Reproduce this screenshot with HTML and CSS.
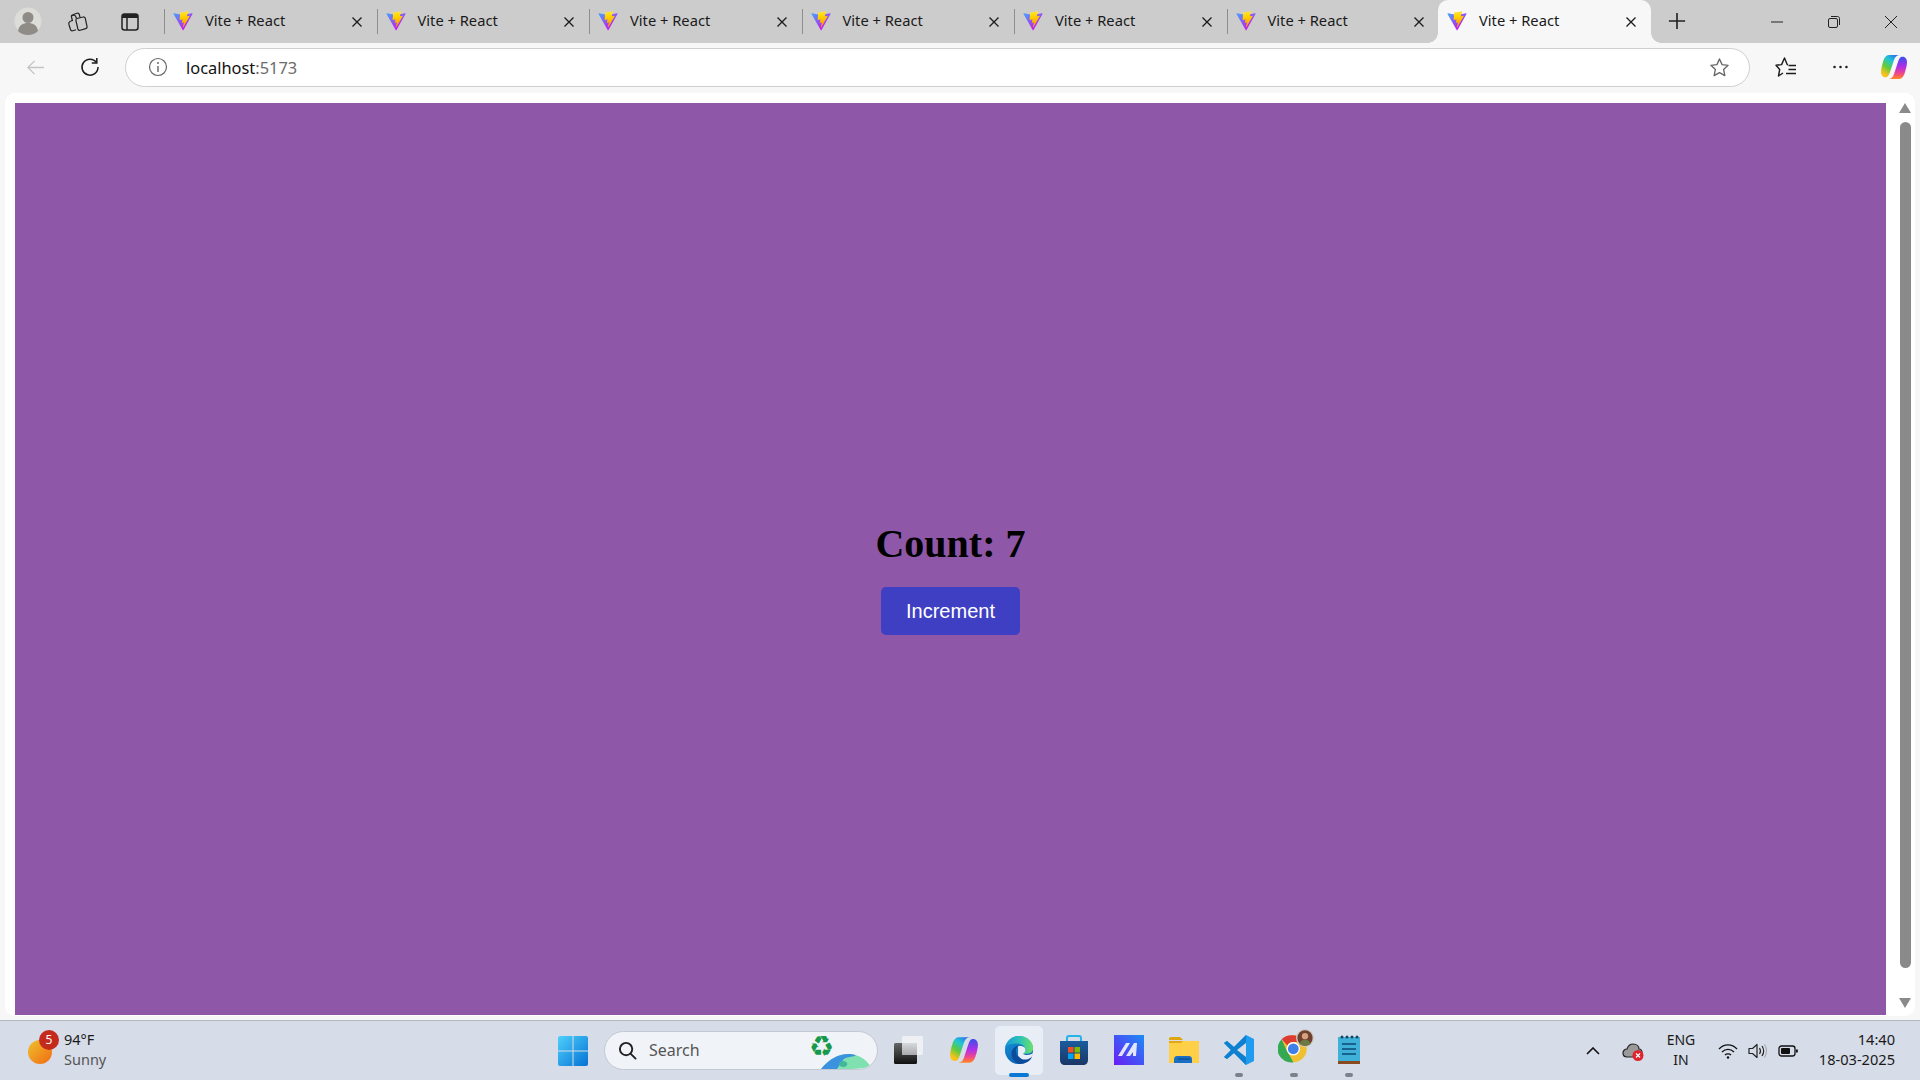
FILE: index.html
```html
<!DOCTYPE html>
<html lang="en">
<head>
    <meta charset="UTF-8">
    <meta name="viewport" content="width=device-width, initial-scale=1.0">
    <title>Vite + React</title>
    <link rel="stylesheet" href="styles.css">
</head>
<body>

<svg class="defs" width="0" height="0">
    <defs>
        <linearGradient id="vite-a" gradientUnits="userSpaceOnUse" x1="6" y1="33" x2="235" y2="344">
            <stop offset="0" stop-color="#3fa8ff"/><stop offset="1" stop-color="#c020f0"/>
        </linearGradient>
        <linearGradient id="vite-b" gradientUnits="userSpaceOnUse" x1="194" y1="8" x2="236" y2="293">
            <stop offset="0" stop-color="#ffe24a"/><stop offset="0.3" stop-color="#ffd800"/><stop offset="1" stop-color="#ff9a00"/>
        </linearGradient>
        <symbol id="vite" viewBox="0 0 410 404">
            <path fill="url(#vite-a)" d="M399.641 59.5246L215.643 388.545C211.844 395.338 202.084 395.378 198.228 388.618L10.5817 59.5563C6.38087 52.1896 12.6802 43.2665 21.0281 44.7586L205.223 77.6824C206.398 77.8924 207.601 77.8904 208.776 77.6763L389.119 44.8058C397.439 43.2894 403.768 52.1434 399.641 59.5246Z"/>
            <path fill="url(#vite-b)" transform="translate(-30 0) scale(1.15 1)" d="M292.965 1.5744L156.801 28.2552C154.563 28.6937 152.906 30.5903 152.771 32.8664L144.395 174.33C144.198 177.662 147.258 180.248 150.51 179.498L188.42 170.749C191.967 169.931 195.172 173.055 194.443 176.622L183.18 231.775C182.422 235.487 185.907 238.661 189.532 237.56L212.947 230.446C216.577 229.344 220.065 232.527 219.297 236.242L201.398 322.875C200.278 328.294 207.486 331.249 210.492 326.603L212.5 323.5L323.454 102.072C325.312 98.3645 322.108 94.137 318.036 94.9228L279.014 102.454C275.347 103.161 272.227 99.746 273.262 96.1583L298.731 7.86689C299.767 4.27314 296.636 0.855181 292.965 1.5744Z"/>
        </symbol>
        <symbol id="close" viewBox="0 0 12 12">
            <path d="M1.5 1.5l9 9M10.5 1.5l-9 9" stroke="#1a1a1a" stroke-width="1.3" fill="none"/>
        </symbol>
        <linearGradient id="copilot-a" x1=".8" y1="0" x2=".2" y2="1">
            <stop offset="0" stop-color="#2a6ee8"/><stop offset=".3" stop-color="#21c4d8"/><stop offset=".6" stop-color="#5ccb3e"/><stop offset=".9" stop-color="#f8c21a"/>
        </linearGradient>
        <linearGradient id="copilot-b" x1=".5" y1="0" x2=".5" y2="1">
            <stop offset="0" stop-color="#3a50e8"/><stop offset=".45" stop-color="#b02ee8"/><stop offset=".75" stop-color="#f0468c"/><stop offset="1" stop-color="#ff8a1e"/>
        </linearGradient>
        <symbol id="copilot" viewBox="0 0 28 28">
            <path fill="url(#copilot-a)" d="M9 2h11c-3 0-5 1.500-6 5l-3 9c-1 3-2 7-4 8-3 1-6-1-6-5 0-3 1-7 2-10 1-4 3-7 6-7z"/>
            <path fill="url(#copilot-b)" d="M19 26H8c3 0 5-1.500 6-5l3-9c1-3 2-7 4-8 3-1 6 1 6 5 0 3-1 7-2 10-1 4-3 7-6 7z"/>
        </symbol>
    </defs>
</svg>

<div class="tabstrip">
    <div class="strip-tools">
        <svg class="profile" viewBox="0 0 28 28">
            <circle cx="14" cy="14" r="13.5" fill="#dcdcd8"/>
            <circle cx="14" cy="10.5" r="5.5" fill="#8f8c88"/>
            <path d="M4 24c1-6 5-8 10-8s9 2 10 8c-2.500 2.500-6 4-10 4s-7.500-1.500-10-4z" fill="#8f8c88"/>
        </svg>
        <svg class="tool-icon" viewBox="0 0 22 22" fill="none" stroke="#222" stroke-width="1.200" stroke-linejoin="round">
            <path d="M11 7.500l6-1.500c1-.3 2 .3 2.300 1.300l1.700 8c.2 1-.3 2-1.300 2.300l-5.500 1.700c-1 .3-2-.3-2.300-1.300L10 9.800c-.2-1 0-2 1-2.300z"/>
            <path d="M10.500 7.500l-.8-2c-.3-1-1.300-1.500-2.300-1.200l-1.400.5"/>
            <path d="M6.500 10L5.500 6c-.3-1 .3-2 1.300-2.300L11 2.200c1-.3 2 .3 2.300 1.300l.7 2.800"/>
            <path d="M6.500 9.500c-1 .3-3 1-3.500 2-.3.700-.2 1.500 0 2.200l1.500 4.800c.3 1 1.300 1.500 2.300 1.200l3.200-1"/>
        </svg>
        <svg class="tool-icon" viewBox="0 0 22 22">
            <rect x="3" y="3" width="16" height="16" rx="2.500" fill="none" stroke="#222" stroke-width="1.500"/>
            <path d="M3 6c0-2 1-3 2.500-3h11C18 3 19 4 19 6v1H3z" fill="#222"/>
            <path d="M8 7v12" stroke="#222" stroke-width="1.500"/>
        </svg>
    </div>
    <div class="tab"><svg class="tab-icon"><use href="#vite"/></svg><span class="tab-title">Vite + React</span><svg class="tab-close"><use href="#close"/></svg></div>
    <div class="tab"><svg class="tab-icon"><use href="#vite"/></svg><span class="tab-title">Vite + React</span><svg class="tab-close"><use href="#close"/></svg></div>
    <div class="tab"><svg class="tab-icon"><use href="#vite"/></svg><span class="tab-title">Vite + React</span><svg class="tab-close"><use href="#close"/></svg></div>
    <div class="tab"><svg class="tab-icon"><use href="#vite"/></svg><span class="tab-title">Vite + React</span><svg class="tab-close"><use href="#close"/></svg></div>
    <div class="tab"><svg class="tab-icon"><use href="#vite"/></svg><span class="tab-title">Vite + React</span><svg class="tab-close"><use href="#close"/></svg></div>
    <div class="tab"><svg class="tab-icon"><use href="#vite"/></svg><span class="tab-title">Vite + React</span><svg class="tab-close"><use href="#close"/></svg></div>
    <div class="tab active"><svg class="tab-icon"><use href="#vite"/></svg><span class="tab-title">Vite + React</span><svg class="tab-close"><use href="#close"/></svg></div>
    <svg class="new-tab" viewBox="0 0 20 20"><path d="M10 1v18M1 10h18" stroke="#222" stroke-width="1.800"/></svg>
    <div class="window-controls">
        <svg viewBox="0 0 14 14"><path d="M1 7h12" stroke="#222" stroke-width="1"/></svg>
        <svg viewBox="0 0 14 14" fill="none" stroke="#222" stroke-width="1"><rect x="1.500" y="3.500" width="9" height="9" rx="1.500"/><path d="M4 1.500h6.500c1.200 0 2 .8 2 2V10"/></svg>
        <svg viewBox="0 0 14 14"><path d="M1 1l12 12M13 1L1 13" stroke="#222" stroke-width="1"/></svg>
    </div>
</div>

<div class="toolbar">
    <svg class="back" viewBox="0 0 20 20"><path d="M19 10H2M9 3l-7 7 7 7" fill="none" stroke="#c4c4c4" stroke-width="1.400"/></svg>
    <svg class="reload" viewBox="0 0 20 20" fill="none" stroke="#1c1c1c" stroke-width="1.500"><path d="M16.500 5.500A8 8 0 1 0 18 10"/><path d="M16.800 1v5h-5"/></svg>
    <div class="address">
        <svg class="info" viewBox="0 0 20 20"><circle cx="10" cy="10" r="8.500" fill="none" stroke="#666" stroke-width="1.200"/><path d="M10 9v6" stroke="#666" stroke-width="1.400"/><circle cx="10" cy="6" r="1" fill="#666"/></svg>
        <span class="url">localhost<span class="port">:5173</span></span>
        <svg class="star" viewBox="0 0 22 22"><path d="M11 2l2.700 6 6.300.7-4.700 4.300 1.300 6.500L11 16.300 5.400 19.500l1.300-6.500L2 8.700 8.300 8z" fill="none" stroke="#666" stroke-width="1.400" stroke-linejoin="round"/></svg>
    </div>
    <svg class="favs" viewBox="0 0 22 22" fill="none" stroke="#1c1c1c" stroke-width="1.400" stroke-linejoin="round"><path d="M8 17l-4.500 3 1.200-6.500L1 9.300l5.600-.7L9.500 2l2.700 6.600 .8 .1"/><path d="M13.500 9.500H21M13.500 13.500H21M11 17.500h10"/></svg>
    <svg class="dots" viewBox="0 0 20 4"><circle cx="3" cy="2" r="1.500" fill="#1c1c1c"/><circle cx="10" cy="2" r="1.500" fill="#1c1c1c"/><circle cx="17" cy="2" r="1.500" fill="#1c1c1c"/></svg>
    <svg class="copilot-btn"><use href="#copilot"/></svg>
</div>

<div class="viewport-wrap">
    <div class="viewport">
        <div id="root">
            <h1 class="count">Count: 7</h1>
            <button class="increment">Increment</button>
        </div>
        <div class="scrollbar">
            <span class="arrow-up"></span>
            <span class="thumb"></span>
            <span class="arrow-down"></span>
        </div>
    </div>
</div>

<div class="taskbar">
    <div class="weather">
        <span class="sun"><span class="badge">5</span></span>
        <div class="weather-text">
            <span class="temp">94°F</span>
            <span class="sky">Sunny</span>
        </div>
    </div>
    <div class="cell">
        <svg class="win" viewBox="0 0 30 30">
            <defs><linearGradient id="win-g" x1="0" y1="0" x2="1" y2="1"><stop offset="0" stop-color="#4fd0fb"/><stop offset="1" stop-color="#0472d4"/></linearGradient></defs>
            <path fill="url(#win-g)" d="M0 2a2 2 0 0 1 2-2h12.500v14.500H0zM15.500 0H28a2 2 0 0 1 2 2v12.500H15.500zM0 15.500h14.500V30H2a2 2 0 0 1-2-2zM15.500 15.500H30V28a2 2 0 0 1-2 2H15.500z"/>
        </svg>
    </div>
    <div class="search">
        <svg class="search-icon" viewBox="0 0 20 20" fill="none" stroke="#222" stroke-width="2"><circle cx="8.500" cy="8.500" r="6.500"/><path d="M13.500 13.500l5 5" stroke-linecap="round"/></svg>
        <span class="search-text">Search</span>
        <span class="recycle">♻</span>
        <svg class="globe" viewBox="0 0 50 15">
            <path d="M0 15C8 5 18 0 27 0c10 0 18 5 23 13-8 1-14 2-20 2z" fill="#7fe0b0"/>
            <path d="M0 15C8 5 18 0 27 0c3 0 6 .5 8 1-4 3-10 1-13 5-2 3-4 6-6 9z" fill="#3b93e0"/>
            <path d="M19 8c3-2 6-1 7 1s-1 4-4 4-5-3-3-5z" fill="#43b79a"/>
        </svg>
    </div>
    <div class="cell">
        <svg class="app" viewBox="0 0 30 28">
            <defs>
                <linearGradient id="tv-g" x1="0" y1="0" x2="0" y2="1"><stop offset="0" stop-color="#666"/><stop offset="1" stop-color="#111"/></linearGradient>
                <linearGradient id="tv-l" x1="0" y1="0" x2="0" y2="1"><stop offset="0" stop-color="#d8d9dc"/><stop offset="1" stop-color="#a9aaad"/></linearGradient>
            </defs>
            <rect x="8" y="0" width="21" height="19" rx="1.500" fill="#eef0f4"/>
            <rect x="0" y="7" width="23" height="21" rx="1.500" fill="url(#tv-g)"/>
            <rect x="8" y="7" width="15" height="12" fill="url(#tv-l)"/>
        </svg>
    </div>
    <div class="cell"><svg class="app"><use href="#copilot"/></svg></div>
    <div class="cell selected">
        <svg class="app" viewBox="0 0 32 32">
            <defs>
                <linearGradient id="edge-a" x1="0" y1=".5" x2="1" y2=".5"><stop offset="0" stop-color="#1a96dc"/><stop offset=".55" stop-color="#2cc4b4"/><stop offset="1" stop-color="#6ee068"/></linearGradient>
                <linearGradient id="edge-b" x1="0" y1="0" x2=".6" y2="1"><stop offset="0" stop-color="#1796dc"/><stop offset="1" stop-color="#0c5fb0"/></linearGradient>
            </defs>
            <circle cx="16" cy="16" r="15" fill="url(#edge-b)"/>
            <path fill="#e8edf6" d="M15 12c6-1 9 2 8 5 0 2-2 3-3 3 3 2 8 2 11-1-1 5-4 9-8 11l-8-8z"/>
            <path fill="url(#edge-a)" d="M1.500 13C3 6 9 1 16 1c9 0 15 6 15 13 0 4-3 6-7 6h-4c2-1 3-2 3-4 0-3-3-7-9-7-5 0-11 1-13.500 4z"/>
            <path fill="#0c4a9a" d="M8 20c0-4 3-8 8-9-3 2-4 5-3 9 1 4 6 7 11 6 2 0 4-1 6-3-2 5-7 8-13 8-5-1-9-6-9-11z"/>
        </svg>
        <span class="indicator wide"></span>
    </div>
    <div class="cell">
        <svg class="app" viewBox="0 0 30 30">
            <defs><linearGradient id="store-g" x1="0" y1="0" x2="0" y2="1"><stop offset="0" stop-color="#1a5c9e"/><stop offset="1" stop-color="#1a3666"/></linearGradient></defs>
            <path d="M8 8V3c0-1 .5-2 2-2h10c1.500 0 2 1 2 2v5" fill="none" stroke="#26b3e8" stroke-width="2"/>
            <path fill="url(#store-g)" d="M1 6h28v19c0 3-2 5-5 5H6c-3 0-5-2-5-5z"/>
            <rect x="9" y="12" width="5.500" height="5.500" fill="#f25022"/>
            <rect x="15.500" y="12" width="5.500" height="5.500" fill="#7fba00"/>
            <rect x="9" y="18.500" width="5.500" height="5.500" fill="#00a4ef"/>
            <rect x="15.500" y="18.500" width="5.500" height="5.500" fill="#ffb900"/>
        </svg>
    </div>
    <div class="cell">
        <svg class="app" viewBox="0 0 30 30">
            <defs><linearGradient id="m-g" x1="1" y1="0" x2="0" y2="1"><stop offset="0" stop-color="#1c8cf5"/><stop offset="1" stop-color="#6a1cf5"/></linearGradient></defs>
            <rect width="30" height="30" fill="url(#m-g)"/>
            <path d="M4 21L12 8h4l-8 13zM12 21l8-13h3l-1 13h-3v-4l-3 4z" fill="#fff" opacity=".85"/>
        </svg>
    </div>
    <div class="cell">
        <svg class="app" viewBox="0 0 30 26">
            <path d="M0 2c0-1 .5-2 2-2h8c1 0 2 .5 3 2l1 1h-14z" fill="#dda50e"/>
            <path d="M0 4h30v22H0z" fill="#e5a713"/>
            <path d="M0 6h12l2-2h16v22H0z" fill="#ffcf48"/>
            <path d="M5 26v-4c0-1.500 1-3 3-3h12c2 0 3 1.500 3 3v4z" fill="#1a6fc2"/>
            <path d="M9 22h12" stroke="#0c4f96" stroke-width="1.400"/>
        </svg>
    </div>
    <div class="cell">
        <svg class="app" viewBox="0 0 30 30">
            <path d="M22 0l8 4v22l-8 4-12-12-7 6-3-2 7-7-7-7 3-2 7 6z" fill="#1f9cf0"/>
            <path d="M22 0v30l-12-12-7 6-3-2 7-7-7-7 3-2 7 6z" fill="#0f7fd0"/>
            <path d="M22 8l-9 7 9 7z" fill="#d6dce8"/>
        </svg>
        <span class="indicator"></span>
    </div>
    <div class="cell">
        <svg class="app chrome" viewBox="0 0 40 40">
            <circle cx="17" cy="22" r="15" fill="#f0c030"/>
            <path d="M17 7a15 15 0 0 1 13 7.500H17a7.500 7.500 0 0 0-6.500 3.700L4 11.500A15 15 0 0 1 17 7z" fill="#dd3c30"/>
            <path d="M4 11.500l6.500 14.300 .5 .2 6 11A15 15 0 0 1 4 11.500z" fill="#34a853"/>
            <circle cx="17" cy="22" r="7.500" fill="#fff"/>
            <circle cx="17" cy="22" r="6" fill="#3f80e8"/>
            <circle cx="30" cy="10" r="10" fill="#cfc9c0"/>
            <circle cx="30" cy="10" r="8.500" fill="#6e4030"/>
            <circle cx="30" cy="8" r="3.500" fill="#d9a07e"/>
            <path d="M24 17c1-4 3-5 6-5s5 1 6 5c-3 2-9 2-12 0z" fill="#6a7a44"/>
        </svg>
        <span class="indicator"></span>
    </div>
    <div class="cell">
        <svg class="app" viewBox="0 0 24 30">
            <rect x="1" y="2" width="22" height="26" fill="#3fb0d8"/>
            <rect x="1" y="26" width="22" height="3" fill="#8a4a20"/>
            <circle cx="5" cy="2" r="1.500" fill="#17455f"/><circle cx="10" cy="2" r="1.500" fill="#17455f"/><circle cx="15" cy="2" r="1.500" fill="#17455f"/><circle cx="20" cy="2" r="1.500" fill="#17455f"/>
            <path d="M5 9h14M5 14h14M5 19h14" stroke="#17618c" stroke-width="1.800"/>
        </svg>
        <span class="indicator"></span>
    </div>
    <div class="tray">
        <div class="tray-item w40"><svg class="chevron" viewBox="0 0 14 8"><path d="M1 7l6-6 6 6" fill="none" stroke="#111" stroke-width="1.600"/></svg></div>
        <div class="tray-item w40">
            <svg class="cloud" viewBox="0 0 22 18">
                <path d="M5 14c-3 0-4-2-4-4s1.500-4 4-4c1-3 3-5 6-5 3.500 0 6 2 6 5 2 0 3 2 3 4s-1 4-3 4z" fill="#9a9a9a" stroke="#222" stroke-width="1.200"/>
                <circle cx="16" cy="12.500" r="5.500" fill="#e0242e"/>
                <path d="M14 10.500l4 4M18 10.500l-4 4" stroke="#fff" stroke-width="1.200"/>
            </svg>
        </div>
        <div class="tray-item lang"><span>ENG</span><span>IN</span></div>
        <div class="tray-group">
            <div class="tray-item w30"><svg class="tray-svg" viewBox="0 0 20 16" fill="none" stroke="#111" stroke-width="1.300"><path d="M1 6c5-5.500 13-5.500 18 0M4 9c3.500-3.500 8.500-3.500 12 0M7 12c1.500-1.500 4.500-1.500 6 0"/><circle cx="10" cy="14.500" r="1.200" fill="#111" stroke="none"/></svg></div>
            <div class="tray-item w30"><svg class="tray-svg" viewBox="0 0 20 16" fill="none" stroke="#222" stroke-width="1.200"><path d="M1 5.500h3.500L9 1.500v13l-4.500-4H1z" stroke-linejoin="round"/><path d="M11.500 5c1.200 1.800 1.200 4.200 0 6M14 3c2 3 2 7 0 10"/><path d="M16.500 1.500c2.500 4 2.500 9 0 13" stroke="#aaa"/></svg></div>
            <div class="tray-item w30"><svg class="tray-svg" viewBox="0 0 20 12"><rect x="1" y="1" width="16" height="10" rx="2.500" fill="none" stroke="#111" stroke-width="1.300"/><rect x="3" y="3" width="9" height="6" rx="1" fill="#111"/><rect x="18" y="4.500" width="1.800" height="3" fill="#111"/></svg></div>
        </div>
        <div class="clock"><span>14:40</span><span>18-03-2025</span></div>
    </div>
</div>

</body>
</html>
```

FILE: styles.css
```css
* {
    box-sizing: border-box;
}

html, body {
    margin: 0;
    padding: 0;
    height: 1080px;
    overflow: hidden;
}

body {
    display: flex;
    flex-direction: column;
    font-family: "Noto Sans", sans-serif;
    background-color: #f7f7f7;
    color: #1a1a1a;
}

.defs {
    position: absolute;
}

/* tab strip */
.tabstrip {
    display: flex;
    align-items: center;
    height: 43px;
    background-color: #cccccc;
    flex-shrink: 0;
}

.strip-tools {
    display: flex;
    align-items: center;
    width: 164px;
    height: 100%;
    padding-left: 14px;
}

.profile {
    width: 28px;
    height: 28px;
    margin-top: -1px;
}

.tool-icon {
    width: 22px;
    height: 22px;
    margin-left: 24px;
    flex-shrink: 0;
}

.tool-icon + .tool-icon {
    margin-left: 31px;
}

.tab {
    position: relative;
    display: flex;
    align-items: center;
    width: 212.5px;
    height: 100%;
    padding-left: 9px;
}

.tab::before {
    content: "";
    position: absolute;
    top: 9px;
    bottom: 9px;
    left: 0;
    width: 1px;
    background-color: #8e8e8e;
}

.tab-icon {
    width: 20px;
    height: 20px;
    flex-shrink: 0;
    margin-top: -1px;
}

.tab-title {
    margin-left: 12px;
    font-size: 14.7px;
    color: #1a1a1a;
    white-space: nowrap;
    margin-top: -3px;
}

.tab-close {
    width: 12px;
    height: 12px;
    margin-left: auto;
    margin-right: 14px;
}

.tab.active {
    background-color: #f7f7f7;
    border-radius: 10px 10px 0 0;
    margin-left: -1px;
}

.tab.active::before,
.tab.active::after {
    content: "";
    position: absolute;
    top: auto;
    bottom: 0;
    width: 10px;
    height: 10px;
}

.tab.active::before {
    left: -10px;
    background: radial-gradient(circle at 0 0, #cccccc 9.5px, #f7f7f7 10px);
}

.tab.active::after {
    right: -10px;
    background: radial-gradient(circle at 100% 0, #cccccc 9.5px, #f7f7f7 10px);
}

.new-tab {
    width: 18px;
    height: 18px;
    margin-left: 17px;
    margin-top: -1px;
}

.window-controls {
    display: flex;
    align-items: center;
    margin-left: auto;
    padding-right: 22px;
    gap: 43px;
}

.window-controls svg {
    width: 14px;
    height: 14px;
}

/* toolbar */
.toolbar {
    display: flex;
    align-items: center;
    height: 50px;
    padding: 0 0 2px 26px;
    flex-shrink: 0;
}

.toolbar svg {
    flex-shrink: 0;
}

.back {
    width: 19px;
    height: 19px;
}

.reload {
    width: 20px;
    height: 20px;
    margin-left: 35px;
}

.address {
    display: flex;
    align-items: center;
    width: 1625px;
    height: 39px;
    margin-left: 25px;
    padding: 0 19px 0 22px;
    background-color: #ffffff;
    border: 1px solid #cfcfcf;
    border-radius: 20px;
    flex-shrink: 0;
}

.info {
    width: 20px;
    height: 20px;
}

.url {
    margin-left: 18px;
    font-size: 16.4px;
    color: #111111;
}

.port {
    color: #6b6b6b;
}

.star {
    width: 21px;
    height: 21px;
    margin-left: auto;
}

.favs {
    width: 22px;
    height: 22px;
    margin-left: 25px;
}

.dots {
    width: 17px;
    height: 4px;
    margin-left: 35px;
}

.copilot-btn {
    width: 28px;
    height: 28px;
    margin-left: 31px;
}

/* page area */
.viewport-wrap {
    flex: 1;
    padding: 0 5px 4px 5px;
    min-height: 0;
}

.viewport {
    display: flex;
    height: 100%;
    padding: 10px 0 1px 10px;
    background-color: #ffffff;
    border-radius: 10px;
}

#root {
    flex: 1;
    display: flex;
    flex-direction: column;
    align-items: center;
    justify-content: center;
    padding-top: 37px;
    background-color: #8e57a8;
}

.count {
    margin: 0 0 20px 0;
    font-family: "Liberation Serif", serif;
    font-size: 40px;
    font-weight: bold;
    color: #000000;
}

.increment {
    width: 139px;
    height: 48px;
    font-family: "Liberation Sans", sans-serif;
    font-size: 20px;
    color: #ffffff;
    background-color: #3f3fc4;
    border: none;
    border-radius: 5px;
    cursor: pointer;
}

.scrollbar {
    display: flex;
    flex-direction: column;
    align-items: center;
    width: 29px;
    padding: 0 0 7px 9px;
}

.arrow-up,
.arrow-down {
    width: 0;
    height: 0;
    border-left: 6.5px solid transparent;
    border-right: 6.5px solid transparent;
}

.arrow-up {
    border-bottom: 10px solid #8a8a8a;
}

.arrow-down {
    border-top: 10px solid #8a8a8a;
}

.thumb {
    flex: 1;
    width: 11px;
    margin: 9px 0 30px 0;
    background-color: #8a8a8a;
    border-radius: 6px;
}

/* taskbar */
.taskbar {
    display: flex;
    align-items: center;
    height: 60px;
    background-color: #d6dce8;
    border-top: 1px solid #b3b7c0;
    flex-shrink: 0;
}

.weather {
    display: flex;
    align-items: center;
    width: 545px;
    padding-left: 28px;
}

.sun {
    position: relative;
    width: 24px;
    height: 24px;
    margin-top: 2px;
    background: linear-gradient(135deg, #eec22e, #f26a12);
    border-radius: 50%;
}

.badge {
    position: absolute;
    top: -10px;
    left: 11px;
    width: 20px;
    height: 20px;
    line-height: 20px;
    text-align: center;
    font-size: 12px;
    color: #ffffff;
    background-color: #c42b1c;
    border-radius: 50%;
}

.weather-text {
    display: flex;
    flex-direction: column;
    margin: -3px 0 0 12px;
    font-size: 14.5px;
    line-height: 20px;
}

.sky {
    color: #555555;
}

.cell {
    position: relative;
    display: flex;
    align-items: center;
    justify-content: center;
    width: 55px;
    height: 100%;
}

.win {
    width: 30px;
    height: 30px;
    margin-top: 1px;
}

.search {
    position: relative;
    display: flex;
    align-items: center;
    width: 274px;
    height: 39px;
    margin: -1px 3px 0 4px;
    padding-left: 13px;
    background-color: #f0f3f8;
    border: 1px solid #c3c8d2;
    border-radius: 20px;
    overflow: hidden;
}

.search-icon {
    width: 19px;
    height: 19px;
}

.search-text {
    margin-left: 12px;
    font-size: 16px;
    color: #555555;
}

.recycle {
    position: absolute;
    top: 0;
    left: 204px;
    font-family: "DejaVu Sans", sans-serif;
    font-size: 28px;
    line-height: 30px;
    color: #16994a;
}

.globe {
    position: absolute;
    right: 6px;
    bottom: 0;
    width: 50px;
    height: 15px;
}

.app {
    width: 30px;
    height: 30px;
    margin-top: -2px;
}

.chrome {
    width: 36px;
    height: 36px;
    margin: -8px 0 0 5px;
}

.selected::before {
    content: "";
    position: absolute;
    top: 5px;
    left: 4px;
    right: 3px;
    bottom: 5px;
    background-color: #e8edf6;
    border-radius: 5px;
}

.selected svg {
    position: relative;
}

.indicator {
    position: absolute;
    left: 50%;
    bottom: 3px;
    width: 8px;
    height: 4px;
    margin-left: -4px;
    background-color: #7d828a;
    border-radius: 2px;
}

.indicator.wide {
    width: 20px;
    margin-left: -10px;
    background-color: #0a78d4;
}

.tray {
    display: flex;
    align-items: center;
    margin-left: auto;
    padding-right: 25px;
    color: #1a1a1a;
}

.tray-item {
    display: flex;
    align-items: center;
    justify-content: center;
}

.w40 {
    width: 40px;
}

.w30 {
    width: 30px;
}

.chevron {
    width: 14px;
    height: 8px;
}

.cloud {
    width: 22px;
    height: 18px;
    margin-top: 3px;
}

.lang {
    flex-direction: column;
    width: 56px;
    margin-top: -1px;
    font-size: 14px;
    line-height: 20px;
}

.tray-group {
    display: flex;
    margin-left: 4px;
}

.tray-svg {
    width: 20px;
    height: 16px;
}

.clock {
    display: flex;
    flex-direction: column;
    align-items: flex-end;
    width: 92px;
    margin-top: -3px;
    font-size: 14.6px;
    line-height: 20px;
}
```
